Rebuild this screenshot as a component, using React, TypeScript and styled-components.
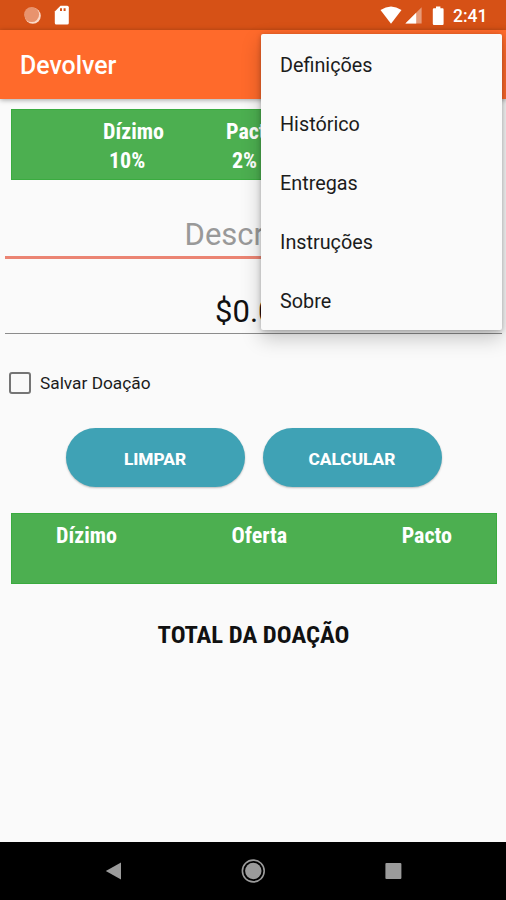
import React from 'react'
import styled, { createGlobalStyle } from 'styled-components'

const menuItems = ['Definições', 'Histórico', 'Entregas', 'Instruções', 'Sobre']

const App: React.FC = () => {
  return (
    <Screen>
      <GlobalStyle />
      <StatusBar>
        <StatusGroup>
          <SyncIcon width="20" height="20" viewBox="0 0 20 20">
            <circle cx="10.8" cy="10.8" r="8" fill="#fbd9c8" />
            <circle cx="9.6" cy="9.6" r="7.5" fill="#e8936e" />
          </SyncIcon>
          <svg width="16" height="20" viewBox="0 0 16 20">
            <path
              d="M6.5 0.8H13.2Q14.8 0.8 14.8 2.3V18Q14.8 19.6 13.2 19.6H2.3Q0.8 19.6 0.8 18V6.5Z"
              fill="#fff"
            />
            <path d="M6 3.2h2v2.8h-2zM9.6 3.2h2v2.8h-2z" fill="#d65116" />
          </svg>
        </StatusGroup>
        <StatusGroup>
          <svg width="22" height="18" viewBox="0 0 22 18">
            <path d="M0.5 4Q11 -3 21.5 4L11 17.8Z" fill="#fff" />
          </svg>
          <SignalIcon width="17" height="17" viewBox="0 0 17 17">
            <path d="M16.6 0.3V16.5H0.4Z" fill="#e79a78" />
            <path d="M11.2 5.7V16.5H0.4Z" fill="#fff" />
          </SignalIcon>
          <BatteryIcon width="12" height="19" viewBox="0 0 12 19">
            <path
              d="M4 0.5H8.4V2.2H10.6Q11.6 2.2 11.6 3.4V17.7Q11.6 18.9 10.6 18.9H2Q0.8 18.9 0.8 17.7V3.4Q0.8 2.2 2 2.2H4Z"
              fill="#fff"
            />
          </BatteryIcon>
          <Clock>2:41</Clock>
        </StatusGroup>
      </StatusBar>

      <AppBar>
        <Title>Devolver</Title>
      </AppBar>

      <Content>
        <RatesCard>
          <Rate>
            <Condensed>Dízimo</Condensed>
            <RateValue>10%</RateValue>
          </Rate>
          <Rate>
            <Condensed>Pacto</Condensed>
            <RateValue>2%</RateValue>
          </Rate>
        </RatesCard>

        <DescriptionField placeholder="Descrição" />
        <AmountField defaultValue="$0.00" />

        <CheckRow>
          <CheckBox type="checkbox" />
          Salvar Doação
        </CheckRow>

        <Actions>
          <Button>LIMPAR</Button>
          <Button>CALCULAR</Button>
        </Actions>

        <ResultCard>
          <Condensed>Dízimo</Condensed>
          <Condensed>Oferta</Condensed>
          <Condensed>Pacto</Condensed>
        </ResultCard>

        <Total>TOTAL DA DOAÇÃO</Total>
      </Content>

      <NavBar>
        <svg width="24" height="24" viewBox="0 0 24 24">
          <path d="M4.8 12L20 3.5V20.5Z" fill="#9b9b9b" />
        </svg>
        <svg width="24" height="24" viewBox="0 0 24 24">
          <circle cx="12.3" cy="12" r="10.9" fill="none" stroke="#9b9b9b" strokeWidth="1.6" />
          <circle cx="12.3" cy="12" r="8.2" fill="#9b9b9b" />
        </svg>
        <svg width="24" height="24" viewBox="0 0 24 24">
          <rect x="4.4" y="4" width="16" height="16" rx="1" fill="#9b9b9b" />
        </svg>
      </NavBar>

      <Menu>
        {menuItems.map((item) => (
          <MenuItem key={item}>{item}</MenuItem>
        ))}
      </Menu>
    </Screen>
  )
}

export default App

const GlobalStyle = createGlobalStyle`
  * {
    box-sizing: border-box;
  }

  body {
    margin: 0;
    font-family: Roboto, sans-serif;
    background: #fafafa;
  }
`

const Screen = styled.div`
  position: relative;
  display: flex;
  flex-direction: column;
  width: 506px;
  height: 900px;
  overflow: hidden;
  background: #fafafa;
`

const StatusBar = styled.div`
  display: flex;
  justify-content: space-between;
  height: 30px;
  padding: 0 20px 0 22px;
  background: #d65116;
`

const StatusGroup = styled.div`
  display: flex;
  align-items: center;
`

const SyncIcon = styled.svg`
  margin-right: 12px;
`

const SignalIcon = styled.svg`
  margin: 1px 10px 0 3px;
`

const BatteryIcon = styled.svg`
  margin-right: 9px;
`

const Clock = styled.span`
  width: 33px;
  padding-top: 2px;
  font-size: 17.5px;
  font-weight: 500;
  line-height: 20px;
  color: #fff;
`

const AppBar = styled.header`
  display: flex;
  align-items: center;
  height: 69px;
  padding: 2px 20px 0;
  background: #ff6a2b;
  box-shadow: 0 1px 5px rgba(0, 0, 0, 0.35);
`

const Title = styled.h1`
  margin: 0;
  font-size: 24.9px;
  font-weight: 500;
  color: #fff;
`

const Content = styled.main`
  display: flex;
  flex: 1;
  flex-direction: column;
  padding: 10px 4px 0 5px;
`

const Condensed = styled.span`
  font-family: 'Roboto Condensed', Roboto, sans-serif;
  font-size: 22px;
  font-weight: 700;
  font-stretch: 75%;
  line-height: 29px;
  color: #fff;
`

const RateValue = styled(Condensed)`
  padding-left: 6px;
`

const RatesCard = styled.section`
  display: flex;
  height: 71px;
  margin: 0 5px 0 6px;
  padding: 7px 0 0 91px;
  background: #4caf50;
  border: 1px solid #3aab3f;
`

const Rate = styled.div`
  display: flex;
  flex-direction: column;
  width: 123px;
`

const Field = styled.input`
  width: 100%;
  border: 0;
  outline: 0;
  background: transparent;
  font-family: Roboto, sans-serif;
  font-size: 31px;
  text-align: center;
  color: #111;

  &::placeholder {
    color: #999;
  }
`

const DescriptionField = styled(Field)`
  height: 52px;
  margin-top: 27px;
  padding: 5px 0 0;
  border-bottom: 3px solid #eb8473;
`

const AmountField = styled(Field)`
  height: 49px;
  margin-top: 26px;
  padding: 4px 0 0 1px;
  border-bottom: 1px solid #8c8c8c;
`

const CheckRow = styled.label`
  display: flex;
  align-items: center;
  gap: 9px;
  height: 24px;
  margin-top: 37px;
  padding-left: 4px;
  font-size: 17.3px;
  color: #1c1c1c;
`

const CheckBox = styled.input`
  width: 22px;
  height: 22px;
  margin: 0;
  appearance: none;
  border: 2px solid #757575;
  border-radius: 3px;
`

const Actions = styled.div`
  display: flex;
  justify-content: center;
  gap: 18px;
  margin-top: 33px;
`

const Button = styled.button`
  width: 179px;
  height: 59px;
  padding: 2px 0 0;
  border: 0;
  border-radius: 30px;
  background: #3fa2b5;
  box-shadow: 0 1px 2px rgba(0, 0, 0, 0.25);
  font-family: Roboto, sans-serif;
  font-size: 17.3px;
  font-weight: 800;
  color: #fff;
`

const ResultCard = styled.section`
  display: flex;
  justify-content: space-between;
  height: 71px;
  margin: 26px 5px 0 6px;
  padding: 7px 44px 0;
  background: #4caf50;
  border: 1px solid #3aab3f;
`

const Total = styled(Condensed)`
  margin-top: 36px;
  font-size: 24.7px;
  text-align: center;
  color: #111;
`

const NavBar = styled.nav`
  display: flex;
  align-items: center;
  justify-content: space-between;
  height: 58px;
  padding: 0 101px;
  background: #000;
`

const Menu = styled.div`
  position: absolute;
  top: 34px;
  left: 261px;
  width: 241px;
  height: 296px;
  border-radius: 2px;
  background: #fafafa;
  box-shadow: 0 8px 20px rgba(0, 0, 0, 0.22), 0 1px 5px rgba(0, 0, 0, 0.25);
`

const MenuItem = styled.div`
  display: flex;
  align-items: center;
  height: 59px;
  padding: 3px 19px 0;
  font-size: 19.8px;
  color: #1c1c1c;
`
